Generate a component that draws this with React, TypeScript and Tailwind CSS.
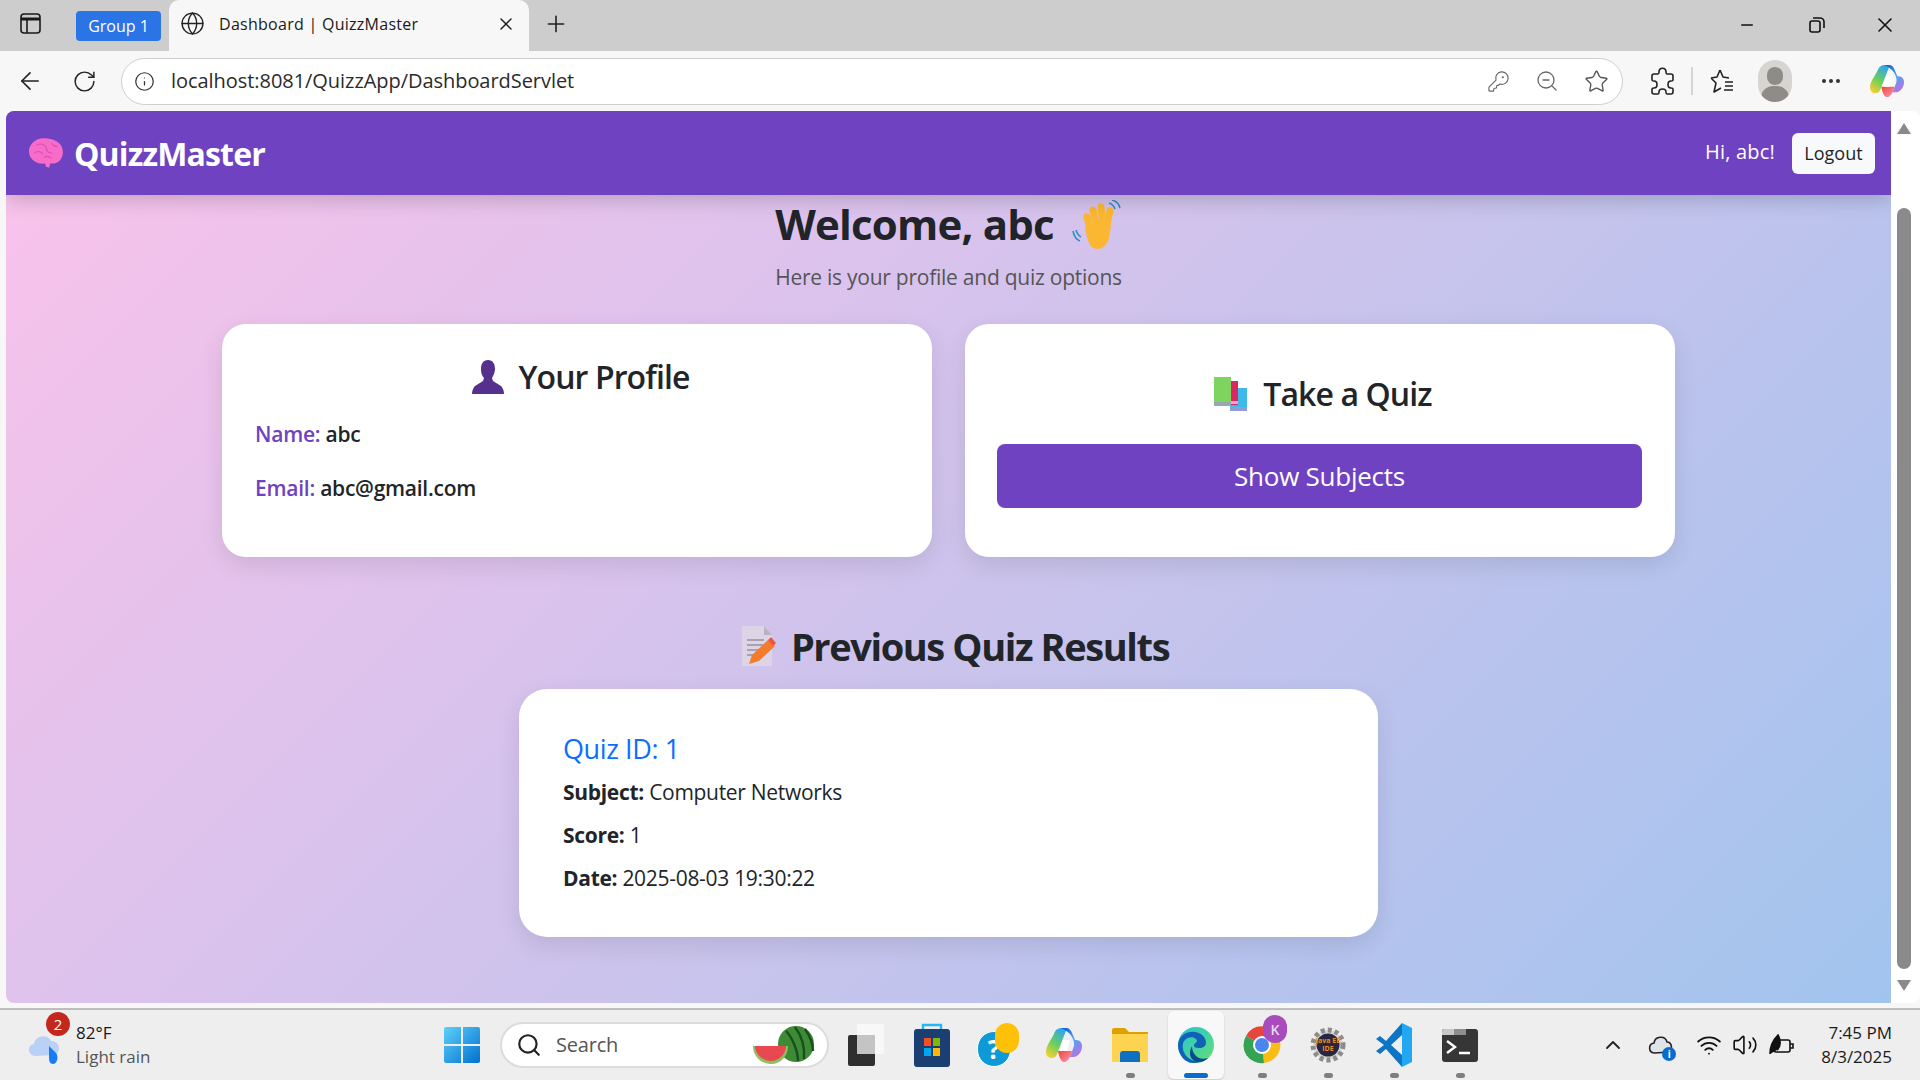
import React from "react";
import {
  ArrowLeft,
  ChevronUp,
  Globe,
  Info,
  KeyRound,
  Minus,
  MoreHorizontal,
  Plus,
  RotateCw,
  Search,
  Star,
  Volume2,
  Wifi,
  X,
  ZoomOut,
} from "lucide-react";

const CopilotIcon = ({ size = 34, id }: { size?: number; id: string }) => (
  <svg width={size} height={size} viewBox="0 0 36 36">
    <defs>
      <linearGradient id={`${id}A`} x1="0.7" y1="0" x2="0.2" y2="1">
        <stop offset="0" stopColor="#2aa5f0" />
        <stop offset="0.55" stopColor="#6fcf5a" />
        <stop offset="1" stopColor="#f7d030" />
      </linearGradient>
      <linearGradient id={`${id}B`} x1="0.2" y1="0" x2="0.8" y2="1">
        <stop offset="0" stopColor="#1560d8" />
        <stop offset="0.5" stopColor="#4fa5f5" />
        <stop offset="1" stopColor="#c46ce0" />
      </linearGradient>
      <linearGradient id={`${id}C`} x1="0" y1="0" x2="1" y2="1">
        <stop offset="0" stopColor="#f2472e" />
        <stop offset="1" stopColor="#f79ac0" />
      </linearGradient>
    </defs>
    <path d="M8 7c1-4 4-6 8-6h5L11 27c-1 3-3 4-6 4-3 0-5-3-5-6 0-6 5-12 8-18z" fill={`url(#${id}A)`} />
    <path d="M15 1h5c3 0 5 2 6 5l3 7h1c4 0 6 3 6 6 0 6-4 11-9 11h-3l4-11c1-6-3-14-13-18z" fill={`url(#${id}B)`} />
    <path d="M12 24h14c-1 5-4 11-8 11-3 0-5-5-6-11z" fill={`url(#${id}C)`} />
    <path d="M17 13h7l-3 11h-7z" fill="#fff" />
  </svg>
);

const BrainEmoji = () => (
  <svg width="36" height="36" viewBox="0 0 34 34">
    <path d="M1 17C0 9 7 3 15 3c9 0 18 4 18 13 0 6-4 11-10 11h-2l-1 4-3-1-1-3C9 28 2 24 1 17z" fill="#f76bc9" />
    <path d="M8 10c3-3 7-1 9 1M6 17c3-2 6-2 8 1M17 11c0 4 2 6 6 6M22 8c2 2 4 3 6 3M15 21c2-1 5-1 7 1" stroke="#e04fb0" strokeWidth="1.1" fill="none" />
  </svg>
);

const HandEmoji = () => (
  <svg width="50" height="50" viewBox="0 0 50 50">
    <g stroke="#fbb731" strokeWidth="7" strokeLinecap="round">
      <path d="M15 17l4 15" />
      <path d="M21 10l4 18" />
      <path d="M29 7l2 20" />
      <path d="M38 11l-4 18" />
    </g>
    <path d="M13 27c6-4 20-4 26-1l-2 12c-2 8-7 11-12 11-7 0-10-9-12-22z" fill="#fbb731" />
    <path d="M37 3c3 1 5 3 6 6M40 0c4 1 7 4 8 8M4 30c1 3 3 6 5 7M1 31c1 5 4 9 7 10" stroke="#2f8fc9" strokeWidth="1.6" fill="none" />
  </svg>
);

const PersonEmoji = () => (
  <svg width="32" height="36" viewBox="0 0 32 36">
    <path d="M16 1c5 0 7 4 7 9 0 4-2 7-3 9l1 3 8 5c2 2 3 5 3 8H0c0-3 1-6 3-8l8-5 1-3c-2-2-3-5-3-9 0-5 2-9 7-9z" fill="#55308d" />
  </svg>
);

const BooksEmoji = () => (
  <svg width="34" height="34" viewBox="0 0 34 34">
    <rect x="16" y="11" width="17" height="23" fill="#3db9ec" />
    <rect x="16" y="30" width="17" height="4" fill="#8d9dd6" />
    <rect x="7" y="4" width="17" height="24" fill="#d9275f" />
    <rect x="7" y="24" width="17" height="3" fill="#f4a5c0" />
    <rect x="0" y="0" width="17" height="25" fill="#7fd45f" />
    <rect x="0" y="25" width="17" height="4" fill="#97a5b5" />
  </svg>
);

const MemoEmoji = () => (
  <svg width="34" height="40" viewBox="0 0 34 40">
    <path d="M0 0h22l8 9v31H0z" fill="#ddd5e6" />
    <path d="M22 0l8 9h-8z" fill="#b9b2c4" />
    <path d="M5 14h17M5 19h17M5 24h13M5 29h8" stroke="#a8a0b4" strokeWidth="2" />
    <path d="M7 38l3-9 16-15 7 6-16 15z" fill="#f47a2c" />
    <path d="M26 14l3-3 5 6-3 3z" fill="#f2553d" />
  </svg>
);

const WeatherIcon = () => (
  <svg width="36" height="40" viewBox="0 0 36 40">
    <path d="M8 30c-9 0-9-11-2-12 1-8 13-11 17-3 9-1 11 12 3 14z" fill="#b9d1f5" />
    <path d="M21 20l7 7c3 4 1 11-3 11-3 0-4-3-4-6z" fill="#1a7cf5" />
  </svg>
);

const WindowsIcon = () => (
  <svg width="36" height="36" viewBox="0 0 36 36">
    <defs>
      <linearGradient id="winA" x1="0" y1="0" x2="1" y2="1">
        <stop offset="0" stopColor="#5ed0fb" />
        <stop offset="1" stopColor="#0071cf" />
      </linearGradient>
    </defs>
    <path d="M0 2a2 2 0 012-2h15v17H0zM19 0h15a2 2 0 012 2v15H19zM0 19h17v17H2a2 2 0 01-2-2zM19 19h17v15a2 2 0 01-2 2H19z" fill="url(#winA)" />
  </svg>
);

const Watermelon = () => (
  <svg width="62" height="40" viewBox="0 0 62 40">
    <circle cx="43" cy="19" r="18" fill="#3f8a35" />
    <path d="M33 6c6 6 12 20 12 30M42 2c6 8 10 20 9 32M52 4c5 7 8 14 8 22" stroke="#17501f" strokeWidth="2.4" fill="none" />
    <path d="M0 21h35c0 10-7 18-17 18S0 31 0 21z" fill="#8fbf60" />
    <path d="M2 21h31c0 8-7 15-15 15S2 29 2 21z" fill="#e8484f" />
  </svg>
);

const TaskViewIcon = () => (
  <svg width="36" height="42" viewBox="0 0 36 42">
    <rect x="0" y="11" width="27" height="31" rx="2" fill="#2f2f2f" />
    <rect x="9" y="0" width="27" height="30" rx="2" fill="#f8f8f8" />
    <rect x="9" y="11" width="18" height="19" fill="#c4c4c4" />
  </svg>
);

const StoreIcon = () => (
  <svg width="36" height="44" viewBox="0 0 36 44">
    <path d="M9 8V2h18v6" stroke="#29b6f0" strokeWidth="2.4" fill="none" />
    <rect x="0" y="6" width="36" height="38" rx="3" fill="#1c3f73" />
    <rect x="10" y="15" width="7" height="8" fill="#f25022" />
    <rect x="19" y="15" width="7" height="8" fill="#7fba00" />
    <rect x="10" y="25" width="7" height="8" fill="#00a4ef" />
    <rect x="19" y="25" width="7" height="8" fill="#ffb900" />
  </svg>
);

const HelpIcon = () => (
  <div className="relative w-[42px] h-[44px]">
    <div className="absolute left-0 bottom-0 w-[34px] h-[36px] rounded-full bg-[#0e9ad7] border border-white flex items-center justify-center text-white font-bold text-[26px] leading-none">
      ?
    </div>
    <div className="absolute right-0 top-0 w-[24px] h-[30px] rounded-full bg-[#ffc107]" />
  </div>
);

const FolderIcon = () => (
  <svg width="36" height="34" viewBox="0 0 36 34">
    <path d="M0 2a2 2 0 012-2h11l4 4h19v6H0z" fill="#e0a000" />
    <rect x="0" y="6" width="36" height="28" fill="#fdd34f" />
    <path d="M8 34v-8a3 3 0 013-3h14a3 3 0 013 3v8z" fill="#0f6fc0" />
  </svg>
);

const EdgeIcon = () => (
  <svg width="36" height="36" viewBox="0 0 36 36">
    <defs>
      <linearGradient id="edgeA" x1="0" y1="0" x2="1" y2="1">
        <stop offset="0" stopColor="#22c3d8" />
        <stop offset="1" stopColor="#66e06f" />
      </linearGradient>
    </defs>
    <circle cx="18" cy="18" r="18" fill="url(#edgeA)" />
    <path d="M0 18C1 8 9 4 17 5c7 1 11 6 11 11 0 3-3 5-7 5-3 0-5-1-5-2 0-4 5-3 2-7-3-3-9-2-12 2-3 5-1 14 6 18 3 2 8 3 11 2-3 2-6 2-8 2C7 36 0 28 0 18z" fill="#0f62b8" />
    <path d="M14 19c0 8 6 15 16 12-2 2-5 4-9 4-7 0-12-7-7-16z" fill="#0a4a8f" />
  </svg>
);

const ChromeIcon = () => (
  <div className="relative">
    <svg width="38" height="38" viewBox="0 0 38 38">
      <path d="M19 19L3 10A18 18 0 0135 10z" fill="#e8453c" />
      <path d="M19 19L35 10a18 18 0 01-14 27z" fill="#f9bc15" />
      <path d="M19 19l2 18A18 18 0 013 10z" fill="#34a353" />
      <circle cx="19" cy="19" r="9" fill="#fff" />
      <circle cx="19" cy="19" r="7" fill="#4a86f0" />
    </svg>
    <div className="absolute -right-[6px] -top-[11px] w-[24px] h-[28px] rounded-full bg-[#a74bbd] text-[#e8d8ee] text-[14px] font-semibold flex items-center justify-center">
      K
    </div>
  </div>
);

const JavaIcon = () => (
  <div className="relative w-[36px] h-[38px] flex items-center justify-center">
    <svg width="36" height="38" viewBox="0 0 36 38" className="absolute inset-0">
      <circle cx="18" cy="19" r="15" fill="#d9d9d9" stroke="#8c8c8c" strokeWidth="5" strokeDasharray="4 3" />
      <circle cx="18" cy="19" r="11.5" fill="#2a2540" />
    </svg>
    <div className="relative flex flex-col items-center text-[7px] leading-[8px] font-bold text-[#f08c1e] whitespace-nowrap">
      <span>Java EE</span>
      <span>IDE</span>
    </div>
  </div>
);

const VSCodeIcon = () => (
  <svg width="36" height="44" viewBox="0 0 36 44">
    <path d="M26 0l10 5v34l-10 5z" fill="#22a7f2" />
    <path d="M26 0v12L15 22l11 10v12L10 26l-6 5-4-3 8-6-8-6 4-3 6 5z" fill="#0c75c4" />
  </svg>
);

const TerminalIcon = () => (
  <div className="w-[36px] h-[33px] rounded-[3px] bg-[#363636] overflow-hidden">
    <div className="h-[6px] flex">
      <div className="w-[12px] bg-[#c8c8c8]" />
      <div className="w-[12px] bg-[#8e8e8e]" />
    </div>
    <svg width="36" height="27" viewBox="0 0 36 27">
      <path d="M5 6l8 6-8 6" stroke="#fff" strokeWidth="2.4" fill="none" />
      <path d="M17 18h11" stroke="#fff" strokeWidth="2.4" />
    </svg>
  </div>
);

const ProfileRow = ({ label, value }: { label: string; value: string }) => (
  <p className="text-[21px] leading-[28px] font-semibold text-[#212529] tracking-[-0.25px]">
    <span className="text-[#6f42c1]">{label}</span> {value}
  </p>
);

const ResultRow = ({ label, value }: { label: string; value: string }) => (
  <p className="text-[21px] leading-[28px] text-[#212529] tracking-[-0.3px]">
    <b className="font-bold">{label}</b> {value}
  </p>
);

const taskbarApps = [
  { icon: <TaskViewIcon />, dot: false },
  { icon: <StoreIcon />, dot: false },
  { icon: <HelpIcon />, dot: false },
  { icon: <CopilotIcon size={36} id="cpTask" />, dot: false },
  { icon: <FolderIcon />, dot: true },
  { icon: <EdgeIcon />, dot: false, active: true },
  { icon: <ChromeIcon />, dot: true },
  { icon: <JavaIcon />, dot: true },
  { icon: <VSCodeIcon />, dot: true },
  { icon: <TerminalIcon />, dot: true },
];

export default function App() {
  return (
    <div className="h-screen w-full flex flex-col overflow-hidden bg-[#f7f7f7] font-['Open_Sans','Noto_Sans',sans-serif] text-[#212529]">
      {/* Tab strip */}
      <div className="h-[51px] shrink-0 bg-[#cdcdcd] flex items-center">
        <div className="w-[76px] pl-[20px] -mt-[4px]">
          <svg width="21" height="21" viewBox="0 0 21 21" fill="none" stroke="#1a1a1a" strokeWidth="1.6">
            <rect x="1" y="1" width="19" height="19" rx="3" />
            <path d="M1 6h19" stroke="#1a1a1a" strokeWidth="3" />
            <path d="M7 6v14" />
          </svg>
        </div>
        <div className="w-[85px] h-[30px] rounded-[4px] bg-[#2b74e6] text-white text-[16px] flex items-center justify-center">
          Group 1
        </div>
        <div className="ml-[8px] w-[360px] h-[51px] self-end bg-[#f7f7f7] rounded-t-[10px] flex items-center pl-[11px] pr-[13px] pb-[4px]">
          <Globe size={25} strokeWidth={1.3} color="#222" />
          <span className="ml-[14px] text-[16px] text-[#1a1a1a] tracking-[0.27px]">Dashboard | QuizzMaster</span>
          <X size={20} strokeWidth={1.8} color="#222" className="ml-auto" />
        </div>
        <Plus size={26} strokeWidth={1.5} color="#222" className="ml-[14px] -mt-[4px]" />
        <div className="ml-auto flex items-center -mt-[2px]">
          <div className="w-[70px] flex justify-center translate-x-[2px]">
            <Minus size={18} strokeWidth={2} color="#111" />
          </div>
          <div className="w-[70px] flex justify-center translate-x-[2px]">
            <svg width="16" height="16" viewBox="0 0 16 16" fill="none" stroke="#111" strokeWidth="1.6">
              <rect x="1" y="4" width="10" height="11" rx="2" />
              <path d="M4 1h7a4 4 0 014 4v6" />
            </svg>
          </div>
          <div className="w-[70px] flex justify-center">
            <X size={24} strokeWidth={1.6} color="#111" />
          </div>
        </div>
      </div>

      {/* Toolbar */}
      <div className="h-[60px] shrink-0 flex items-center bg-[#f7f7f7]">
        <div className="w-[60px] flex justify-center">
          <ArrowLeft size={28} strokeWidth={1.4} color="#222" />
        </div>
        <div className="w-[48px] flex justify-center">
          <RotateCw size={25} strokeWidth={1.4} color="#222" />
        </div>
        <div className="ml-[13px] w-[1502px] h-[47px] rounded-full bg-white border border-[#cfcfcf] flex items-center pl-[12px] pr-[13px]">
          <Info size={21} strokeWidth={1.4} color="#333" />
          <span className="ml-[16px] text-[20px] tracking-[-0.05px] text-[#2b2b2b]">localhost:8081/QuizzApp/DashboardServlet</span>
          <div className="ml-auto flex items-center gap-[25px]">
            <KeyRound size={23} strokeWidth={1.2} color="#666" />
            <ZoomOut size={24} strokeWidth={1.3} color="#666" />
            <Star size={25} strokeWidth={1.3} color="#555" />
          </div>
        </div>
        <div className="ml-[26px] flex items-center">
          <svg width="26" height="28" viewBox="0 0 26 28" fill="none" stroke="#222" strokeWidth="1.6" strokeLinejoin="round">
            <path d="M10 5c0-5 7-5 7 0 0 1 0 2 1 2h4c1 0 2 1 2 2v4c0 1-1 1-2 1-4 0-4 7 0 7 1 0 2 0 2 1v3c0 1-1 2-2 2h-4c-1 0-1-1-1-2 0-4-7-4-7 0 0 1 0 2-1 2H5c-1 0-2-1-2-2v-3c0-1 1-1 2-1 4 0 4-7 0-7-1 0-2 0-2-1V9c0-1 1-2 2-2h4c1 0 1-1 1-2z" />
          </svg>
          <div className="ml-[16px] w-[2px] h-[28px] bg-[#d4d4d4]" />
          <svg width="28" height="28" viewBox="0 0 28 28" fill="none" stroke="#222" strokeWidth="1.6" strokeLinejoin="round" className="ml-[15px]">
            <path d="M12 3l3 7 6 1M3 11l6-1 3-7M3 11l5 5-2 9 7-4M17 15h8M17 19h8M16 23h9" />
          </svg>
          <div className="ml-[22px] w-[34px] h-[42px] rounded-full bg-[#d6d5d1] relative overflow-hidden">
            <div className="absolute left-[9px] top-[7px] w-[16px] h-[18px] rounded-full bg-[#8f8c87]" />
            <div className="absolute left-[3px] top-[26px] w-[28px] h-[24px] rounded-full bg-[#8f8c87]" />
          </div>
          <MoreHorizontal size={24} strokeWidth={2} color="#333" className="ml-[27px]" />
          <div className="ml-[27px]">
            <CopilotIcon size={34} id="cpBar" />
          </div>
        </div>
      </div>

      {/* Browser viewport */}
      <div className="h-[897px] shrink-0 pl-[6px] pb-[5px] flex">
        <div className="flex-1 min-w-0 rounded-tl-[8px] rounded-bl-[8px] overflow-hidden flex flex-col bg-[linear-gradient(135deg,#fbc2eb,#a1c4ee)]">
          <nav className="relative z-10 h-[84px] shrink-0 bg-[#6f42c1] shadow-[0_4px_20px_rgba(0,0,0,0.2)] flex items-center pl-[22px] pr-[16px]">
            <BrainEmoji />
            <span className="ml-[10px] mt-[2px] text-white text-[32px] font-bold tracking-[-0.85px]">QuizzMaster</span>
            <span className="ml-auto -mt-[3px] text-white text-[20px] tracking-[0.2px]">Hi, abc!</span>
            <button className="ml-[17px] w-[83px] h-[41px] rounded-[6px] bg-[#f8f9fa] text-[#212529] text-[18px]">
              Logout
            </button>
          </nav>

          <main className="flex-1 min-h-0">
            <div className="flex flex-col items-center">
              <h1 className="h-[58px] text-[42px] leading-[58px] font-bold tracking-[-0.8px] text-[#212529] flex items-center">
                Welcome, abc
                <span className="ml-[18px] mt-[2px]">
                  <HandEmoji />
                </span>
              </h1>
              <p className="mt-[9px] text-[21px] leading-[30px] text-[#555] tracking-[-0.25px]">
                Here is your profile and quiz options
              </p>
            </div>

            <div className="mt-[32px] ml-[216px] w-[1453px] grid grid-cols-2 gap-[33px]">
              <section className="h-[233px] bg-white rounded-[24px] shadow-[0_8px_24px_rgba(0,0,0,0.1)] px-[33px] pt-[32px]">
                <h3 className="pl-[7px] flex items-center justify-center text-[32px] leading-[42px] font-semibold tracking-[-0.9px] text-[#212529]">
                  <PersonEmoji />
                  <span className="ml-[15px]">Your Profile</span>
                </h3>
                <div className="mt-[22px] flex flex-col gap-[26px]">
                  <ProfileRow label="Name:" value="abc" />
                  <ProfileRow label="Email:" value="abc@gmail.com" />
                </div>
              </section>
              <section className="h-[233px] bg-white rounded-[24px] shadow-[0_8px_24px_rgba(0,0,0,0.1)] px-[32px] pt-[49px]">
                <h3 className="pl-[6px] flex items-center justify-center text-[32px] leading-[42px] font-semibold tracking-[-0.9px] text-[#212529]">
                  <BooksEmoji />
                  <span className="ml-[15px]">Take a Quiz</span>
                </h3>
                <button className="mt-[29px] w-[645px] h-[64px] rounded-[8px] bg-[#6f42c1] text-white text-[26px] tracking-[-0.25px]">
                  Show Subjects
                </button>
              </section>
            </div>

            <h2 className="mt-[64px] ml-[14px] flex items-center justify-center text-[38px] leading-[50px] font-bold tracking-[-1.4px] text-[#212529]">
              <MemoEmoji />
              <span className="ml-[15px]">Previous Quiz Results</span>
            </h2>

            <section className="mt-[18px] ml-[513px] w-[859px] h-[248px] bg-white rounded-[28px] shadow-[0_8px_24px_rgba(0,0,0,0.1)] px-[44px] pt-[40px]">
              <h4 className="text-[27px] leading-[40px] text-[#0d6efd] tracking-[-0.4px]">Quiz ID: 1</h4>
              <div className="mt-[9px] flex flex-col gap-[15px]">
                <ResultRow label="Subject:" value="Computer Networks" />
                <ResultRow label="Score:" value="1" />
                <ResultRow label="Date:" value="2025-08-03 19:30:22" />
              </div>
            </section>
          </main>
        </div>

        {/* Scrollbar */}
        <div className="w-[29px] shrink-0 bg-white rounded-tr-[8px] rounded-br-[8px] flex flex-col items-center pt-[12px] pb-[12px] pr-[4px]">
          <div className="w-0 h-0 border-l-[7px] border-r-[7px] border-b-[11px] border-l-transparent border-r-transparent border-b-[#8a8a8a]" />
          <div className="mt-[74px] w-[14px] flex-1 rounded-full bg-[#8a8a8a]" />
          <div className="mt-[11px] w-0 h-0 border-l-[7px] border-r-[7px] border-t-[11px] border-l-transparent border-r-transparent border-t-[#8a8a8a]" />
        </div>
      </div>

      {/* Taskbar */}
      <div className="flex-1 min-h-0 bg-[#eeeeee] border-t-2 border-[#bdbdbd] flex items-center">
        <div className="w-[429px] flex items-center pl-[28px]">
          <div className="relative w-[48px] h-[44px] mt-[6px]">
            <WeatherIcon />
            <div className="absolute left-[18px] -top-[14px] w-[24px] h-[24px] rounded-full bg-[#c4271c] text-white text-[15px] flex items-center justify-center">
              2
            </div>
          </div>
          <div className="flex flex-col">
            <span className="text-[17px] leading-[24px] text-[#1a1a1a]">82°F</span>
            <span className="text-[17px] leading-[24px] text-[#555]">Light rain</span>
          </div>
        </div>
        <div className="w-[66px] flex justify-center">
          <WindowsIcon />
        </div>
        <div className="ml-[5px] w-[329px] h-[46px] rounded-full bg-white border-2 border-[#dcdcdc] flex items-center pl-[14px] pr-[12px]">
          <Search size={26} strokeWidth={2} color="#222" />
          <span className="ml-[14px] text-[20px] text-[#555] tracking-[-0.2px]">Search</span>
          <span className="ml-auto">
            <Watermelon />
          </span>
        </div>
        <div className="ml-[4px] flex items-center">
          {taskbarApps.map((app, i) => (
            <div key={i} className="w-[66px] h-[68px] relative flex items-center justify-center">
              {app.active && (
                <div className="absolute left-[5px] top-0 w-[56px] h-[68px] rounded-[6px] bg-[#f8f8f8] shadow-[0_1px_2px_rgba(0,0,0,0.15)]" />
              )}
              <div className="relative">{app.icon}</div>
              {app.dot && <div className="absolute bottom-[1px] left-[29px] w-[9px] h-[5px] rounded-full bg-[#7f7f7f]" />}
              {app.active && <div className="absolute bottom-[1px] left-[21px] w-[24px] h-[5px] rounded-full bg-[#0a6ccf]" />}
            </div>
          ))}
        </div>
        <div className="ml-auto flex items-center pr-[28px]">
          <ChevronUp size={24} strokeWidth={1.8} color="#222" />
          <div className="ml-[23px] relative w-[26px] h-[24px]">
            <svg width="26" height="22" viewBox="0 0 26 22">
              <path d="M7 20c-7 0-7-9-1-10C7 3 17 2 19 9c5 0 6 8 2 10z" fill="#dfe4e8" stroke="#222" strokeWidth="1.6" />
            </svg>
            <div className="absolute -right-[2px] bottom-[-4px] w-[14px] h-[14px] rounded-full bg-[#0a6ccf] text-white text-[10px] font-bold flex items-center justify-center">
              i
            </div>
          </div>
          <Wifi size={26} strokeWidth={1.7} color="#111" className="ml-[22px]" />
          <Volume2 size={26} strokeWidth={1.5} color="#111" className="ml-[10px]" />
          <svg width="28" height="24" viewBox="0 0 28 24" fill="none" stroke="#111" strokeWidth="1.6" className="ml-[10px]">
            <rect x="6" y="7" width="16" height="12" rx="2" />
            <path d="M22 11h3v4h-3" />
            <path d="M2 21c0-8 3-14 8-19 3 5 3 12-1 15" fill="#111" />
          </svg>
          <div className="ml-[25px] flex flex-col items-end text-[17px] leading-[24px] text-[#1a1a1a]">
            <span>7:45 PM</span>
            <span>8/3/2025</span>
          </div>
        </div>
      </div>
    </div>
  );
}
